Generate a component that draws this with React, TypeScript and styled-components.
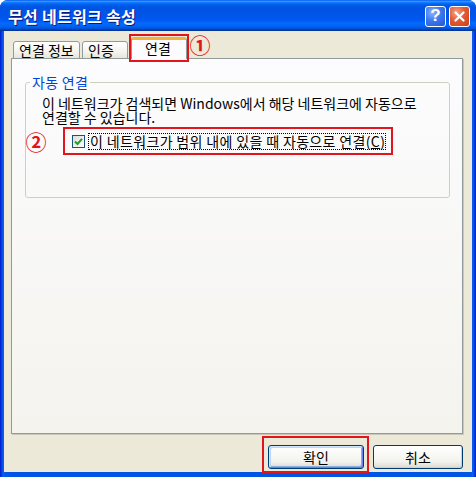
import React from 'react';
import styled, { createGlobalStyle } from 'styled-components';

const GlobalStyle = createGlobalStyle`
    html, body {
        margin: 0;
        padding: 0;
        background: #ffffff;
    }
    body {
        font-family: "Noto Sans CJK KR", "Noto Sans", sans-serif;
        font-size: 14px;
        color: #000;
    }
`;

const Window = styled.div`
    width: 476px;
    height: 477px;
    display: flex;
    flex-direction: column;
    background: linear-gradient(90deg, #0019cf 0px, #0a5ef0 3px, #0055e5 6px, #0055e5 calc(100% - 6px), #0a5ef0 calc(100% - 3px), #0019cf 100%);
    border-radius: 8px 8px 0 0;
    overflow: hidden;
`;

const TitleBar = styled.div`
    height: 31px;
    flex: none;
    display: flex;
    align-items: center;
    justify-content: space-between;
    padding: 0 6px 0 8px;
    background: linear-gradient(180deg, #0058ee 0%, #3593ff 4%, #288eff 6%, #127dff 8%, #036ffc 10%, #0262ee 14%, #0057e5 20%, #0054e3 24%, #0055eb 56%, #005bf5 66%, #026afe 76%, #0062ef 86%, #0052d6 92%, #0040ab 96%, #003092 100%);
`;

const Title = styled.span`
    color: #ffffff;
    font-weight: bold;
    font-size: 16px;
    letter-spacing: 0.3px;
    text-shadow: 1px 1px 0 #0a1883;
`;

const TitleButtons = styled.div`
    display: flex;
    gap: 3px;
    margin-top: 1px;
`;

const CaptionButton = styled.div<{ $close?: boolean }>`
    width: 21px;
    height: 21px;
    box-sizing: border-box;
    border: 1px solid #ffffff;
    border-radius: 3px;
    display: flex;
    align-items: center;
    justify-content: center;
    color: #ffffff;
    font-family: "Liberation Sans", sans-serif;
    font-weight: bold;
    font-size: 17px;
    background: ${p => p.$close
        ? 'radial-gradient(circle at 35% 30%, #f4a58b 0%, #e45a32 45%, #c7401a 100%)'
        : 'radial-gradient(circle at 35% 30%, #8fb4ff 0%, #3c78ef 45%, #1f55d8 100%)'};
`;

const Body = styled.div`
    flex: 1;
    margin: 0 4px 5px 4px;
    background: #ece9d8;
    padding: 6px 0 0 7px;
    display: flex;
    flex-direction: column;
`;

const TabRow = styled.div`
    display: flex;
    align-items: flex-end;
    gap: 2px;
    height: 22px;
    padding-left: 2px;
    margin-bottom: -1px;
    position: relative;
    z-index: 1;
`;

const Tab = styled.div<{ $width: number; $active?: boolean }>`
    position: relative;
    width: ${p => p.$width}px;
    height: ${p => (p.$active ? 22 : 18)}px;
    box-sizing: border-box;
    margin-left: ${p => (p.$active ? 1 : 0)}px;
    border: 1px solid #919b9c;
    border-bottom: ${p => (p.$active ? 'none' : '1px solid #919b9c')};
    border-top: ${p => (p.$active ? '3px solid #f3b13b' : '1px solid #919b9c')};
    border-radius: 3px 3px 0 0;
    background: ${p => (p.$active ? '#fcfcfe' : 'linear-gradient(180deg, #ffffff 0%, #f4f3ee 60%, #e6e4db 100%)')};
    display: flex;
    align-items: ${p => (p.$active ? 'flex-start' : 'center')};
    padding: ${p => (p.$active ? '0 0 0 13px' : '0 0 0 5px')};
    line-height: 16px;
    white-space: nowrap;

    &::after {
        content: ${p => (p.$active ? "''" : 'none')};
        position: absolute;
        left: -3px;
        right: -3px;
        top: -6px;
        bottom: -3px;
        border: 2px solid #e2151d;
    }
`;

const Marker = styled.span`
    color: #e2151d;
    font-size: 21px;
    font-weight: bold;
    line-height: 22px;
    width: 22px;
    text-align: center;
    flex: none;
`;

const TabMarker = styled(Marker)`
    align-self: center;
    margin-left: 0;
    margin-top: -8px;
`;

const Panel = styled.div`
    width: 452px;
    height: 376px;
    flex: none;
    box-sizing: border-box;
    border: 1px solid #919b9c;
    box-shadow: 1px 1px 0 #c9c7ba;
    background: linear-gradient(180deg, #fcfcfe 0%, #f4f3ee 100%);
    padding: 14px 12px 0 13px;
`;

const GroupBox = styled.fieldset`
    margin: 0;
    padding: 0;
    height: 125px;
    box-sizing: border-box;
    border: 1px solid #d0d0bf;
    border-radius: 3px;
`;

const GroupLegend = styled.legend`
    color: #0046d5;
    padding: 0 2px;
    margin-left: 4px;
    line-height: 18px;
    letter-spacing: 0.3px;
`;

const Description = styled.p`
    margin: 5px 16px 0 16px;
    line-height: 14px;
`;

const CheckRow = styled.div`
    display: flex;
    align-items: center;
    gap: 16px;
    margin: 3px 0 0 -1px;
`;

const Highlight = styled.div`
    width: 330px;
    height: 28px;
    box-sizing: border-box;
    border: 2px solid #e2151d;
    display: flex;
    align-items: center;
    padding-left: 7px;
    gap: 3px;
`;

const CheckBox = styled.span`
    width: 13px;
    height: 13px;
    box-sizing: border-box;
    border: 1px solid #1c5180;
    background: linear-gradient(135deg, #dcdcd7 0%, #ffffff 100%);
    display: flex;
    align-items: center;
    justify-content: center;
    flex: none;
`;

const CheckLabel = styled.span`
    border: 1px dotted #000;
    padding: 0 0 0 1px;
    line-height: 15px;
    letter-spacing: 0.35px;
    white-space: nowrap;
`;

const ButtonRow = styled.div`
    display: flex;
    justify-content: flex-end;
    gap: 9px;
    width: 452px;
    margin-top: 11px;
`;

const MarkedWrap = styled.div`
    position: relative;

    &::after {
        content: '';
        position: absolute;
        left: -6px;
        right: -5px;
        top: -9px;
        bottom: -4px;
        border: 2px solid #e2151d;
        pointer-events: none;
    }
`;

const Button = styled.button<{ $width: number; $default?: boolean }>`
    width: ${p => p.$width}px;
    height: 24px;
    box-sizing: border-box;
    border: 1px solid #003c74;
    border-radius: 3px;
    font-family: "Noto Sans CJK KR", "Noto Sans", sans-serif;
    font-size: 14px;
    color: #000;
    padding: 0;
    background: linear-gradient(180deg, #ffffff 0%, #f3f3ee 70%, #dcd8cc 100%);
    box-shadow: ${p => (p.$default
        ? 'inset 1px 1px 0 #cee7ff, inset -1px -1px 0 #6982ee, inset 2px 2px 0 #bcd4f6, inset -2px -2px 0 #89ade4'
        : 'inset -1px -1px 0 #d6d0c5')};
`;

const Check = () => (
    <svg width="9" height="9" viewBox="0 0 9 9">
        <path d="M1 4.5 L3.5 7 L8 1.8" fill="none" stroke="#21a121" strokeWidth="2" />
    </svg>
);

const CloseGlyph = () => (
    <svg width="11" height="11" viewBox="0 0 11 11">
        <path d="M1.5 1.5 L9.5 9.5 M9.5 1.5 L1.5 9.5" stroke="#ffffff" strokeWidth="2.2" strokeLinecap="round" />
    </svg>
);

const App: React.FC = () => {
    return (
        <>
            <GlobalStyle />
            <Window>
                <TitleBar>
                    <Title>무선 네트워크 속성</Title>
                    <TitleButtons>
                        <CaptionButton>?</CaptionButton>
                        <CaptionButton $close><CloseGlyph /></CaptionButton>
                    </TitleButtons>
                </TitleBar>
                <Body>
                    <TabRow>
                        <Tab $width={67}>연결 정보</Tab>
                        <Tab $width={46}>인증</Tab>
                        <Tab $width={56} $active>연결</Tab>
                        <TabMarker>①</TabMarker>
                    </TabRow>
                    <Panel>
                        <GroupBox>
                            <GroupLegend>자동 연결</GroupLegend>
                            <Description>
                                이 네트워크가 검색되면 Windows에서 해당 네트워크에 자동으로<br />
                                연결할 수 있습니다.
                            </Description>
                            <CheckRow>
                                <Marker>②</Marker>
                                <Highlight>
                                    <CheckBox><Check /></CheckBox>
                                    <CheckLabel>이 네트워크가 범위 내에 있을 때 자동으로 연결(<u>C</u>)</CheckLabel>
                                </Highlight>
                            </CheckRow>
                        </GroupBox>
                    </Panel>
                    <ButtonRow>
                        <MarkedWrap>
                            <Button $width={96} $default>확인</Button>
                        </MarkedWrap>
                        <Button $width={90}>취소</Button>
                    </ButtonRow>
                </Body>
            </Window>
        </>
    );
};

export default App;
